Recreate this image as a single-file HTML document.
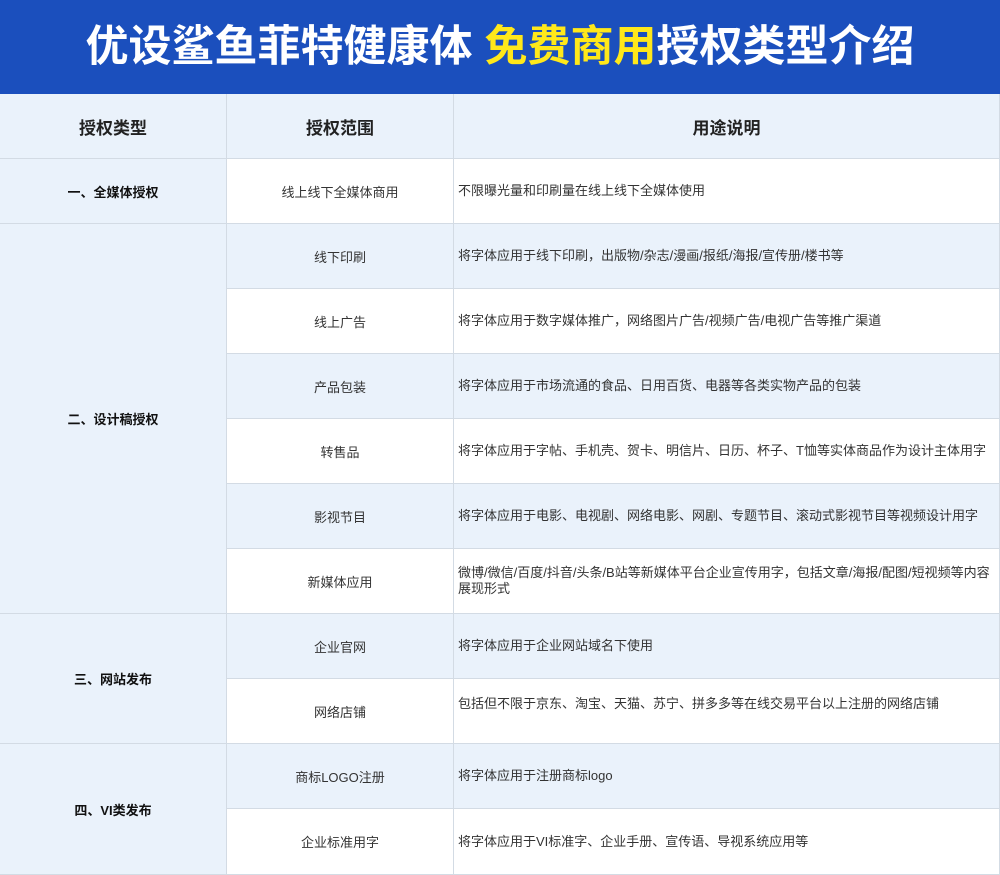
<!DOCTYPE html><html><head><meta charset="utf-8"><style>
*{margin:0;padding:0;box-sizing:border-box}
body{width:1000px;height:875px;background:#fff;font-family:"Liberation Sans","Noto Sans CJK SC",sans-serif;position:relative;overflow:hidden}
.ban{position:absolute;left:0;top:0;width:1000px;height:94px;background:#1b4fbd;color:#fff;font-size:43px;font-weight:bold;text-align:center;line-height:94px;letter-spacing:0}
.ban span{color:#ffe81a}
.c{position:absolute;display:flex;align-items:center;font-size:13px;color:#333;border-right:1px solid #d3dbe4;border-bottom:1px solid #d3dbe4}
.b{background:#eaf2fb}.w{background:#fff}
.ctr{justify-content:center;text-align:center}
.l{padding-left:4px;line-height:16px}
.h{font-size:17px;font-weight:bold;color:#222}
.k{font-weight:bold;color:#111}
</style></head><body>
<div class="ban">优设鲨鱼菲特健康体 <span>免费商用</span>授权类型介绍</div>
<div class="c b ctr h" style="left:0;top:94px;width:227px;height:65px">授权类型</div>
<div class="c b ctr h" style="left:227px;top:94px;width:227px;height:65px">授权范围</div>
<div class="c b ctr h" style="left:454px;top:94px;width:546px;height:65px">用途说明</div>

<div class="c b ctr k" style="left:0;top:159px;width:227px;height:65px">一、全媒体授权</div>
<div class="c b ctr k" style="left:0;top:224px;width:227px;height:390px">二、设计稿授权</div>
<div class="c b ctr k" style="left:0;top:614px;width:227px;height:130px">三、网站发布</div>
<div class="c b ctr k" style="left:0;top:744px;width:227px;height:131px">四、VI类发布</div>

<div class="c w ctr" style="left:227px;top:159px;width:227px;height:65px">线上线下全媒体商用</div>
<div class="c w l" style="left:454px;top:159px;width:546px;height:65px">不限曝光量和印刷量在线上线下全媒体使用</div>
<div class="c b ctr" style="left:227px;top:224px;width:227px;height:65px">线下印刷</div>
<div class="c b l" style="left:454px;top:224px;width:546px;height:65px">将字体应用于线下印刷，出版物/杂志/漫画/报纸/海报/宣传册/楼书等</div>
<div class="c w ctr" style="left:227px;top:289px;width:227px;height:65px">线上广告</div>
<div class="c w l" style="left:454px;top:289px;width:546px;height:65px">将字体应用于数字媒体推广，网络图片广告/视频广告/电视广告等推广渠道</div>
<div class="c b ctr" style="left:227px;top:354px;width:227px;height:65px">产品包装</div>
<div class="c b l" style="left:454px;top:354px;width:546px;height:65px">将字体应用于市场流通的食品、日用百货、电器等各类实物产品的包装</div>
<div class="c w ctr" style="left:227px;top:419px;width:227px;height:65px">转售品</div>
<div class="c w l" style="left:454px;top:419px;width:546px;height:65px">将字体应用于字帖、手机壳、贺卡、明信片、日历、杯子、T恤等实体商品作为设计主体用字</div>
<div class="c b ctr" style="left:227px;top:484px;width:227px;height:65px">影视节目</div>
<div class="c b l" style="left:454px;top:484px;width:546px;height:65px">将字体应用于电影、电视剧、网络电影、网剧、专题节目、滚动式影视节目等视频设计用字</div>
<div class="c w ctr" style="left:227px;top:549px;width:227px;height:65px">新媒体应用</div>
<div class="c w l" style="left:454px;top:549px;width:546px;height:65px">微博/微信/百度/抖音/头条/B站等新媒体平台企业宣传用字，包括文章/海报/配图/短视频等内容<br>展现形式</div>
<div class="c b ctr" style="left:227px;top:614px;width:227px;height:65px">企业官网</div>
<div class="c b l" style="left:454px;top:614px;width:546px;height:65px">将字体应用于企业网站域名下使用</div>
<div class="c w ctr" style="left:227px;top:679px;width:227px;height:65px;padding-top:0px">网络店铺</div>
<div class="c w l" style="left:454px;top:679px;width:546px;height:65px;padding-bottom:14px">包括但不限于京东、淘宝、天猫、苏宁、拼多多等在线交易平台以上注册的网络店铺</div>
<div class="c b ctr" style="left:227px;top:744px;width:227px;height:65px">商标LOGO注册</div>
<div class="c b l" style="left:454px;top:744px;width:546px;height:65px">将字体应用于注册商标logo</div>
<div class="c w ctr" style="left:227px;top:809px;width:227px;height:66px">企业标准用字</div>
<div class="c w l" style="left:454px;top:809px;width:546px;height:66px">将字体应用于VI标准字、企业手册、宣传语、导视系统应用等</div>
</body></html>
